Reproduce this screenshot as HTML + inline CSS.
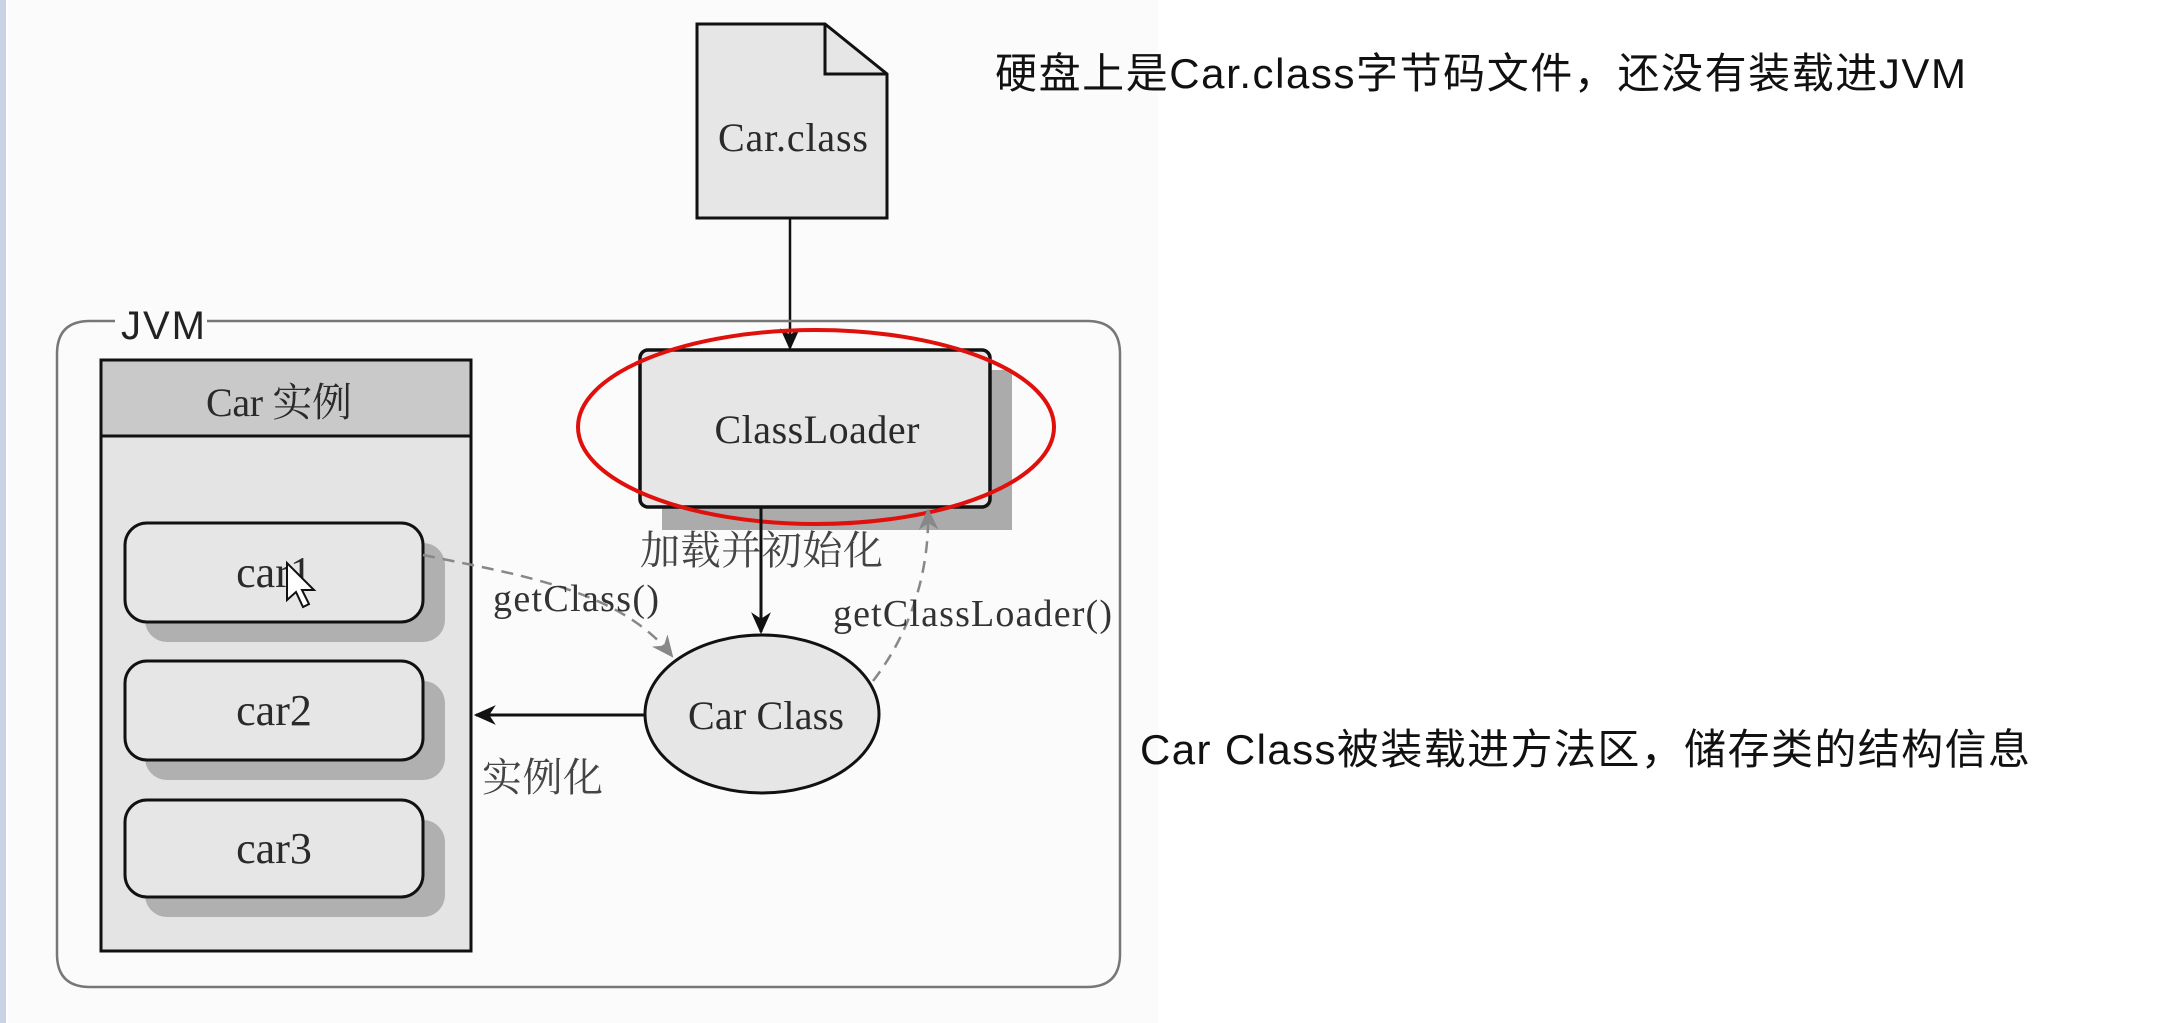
<!DOCTYPE html>
<html><head><meta charset="utf-8"><style>
html,body{margin:0;padding:0;background:#fff;width:2173px;height:1023px;overflow:hidden}
svg{display:block}
.s{font-family:"Liberation Serif","Noto Serif CJK SC",serif;fill:#2a2a2a}
.c{font-family:"Liberation Sans","Noto Sans CJK SC",sans-serif;fill:#111}
</style></head><body>
<svg width="2173" height="1023" viewBox="0 0 2173 1023" xmlns="http://www.w3.org/2000/svg">
<defs>
<marker id="ab" viewBox="0 0 20 20" refX="18" refY="10" markerWidth="22" markerHeight="22" markerUnits="userSpaceOnUse" orient="auto"><path d="M0,1 L20,10 L0,19 L6,10 Z" fill="#111"/></marker>
<marker id="ag" viewBox="0 0 20 20" refX="18" refY="10" markerWidth="22" markerHeight="22" markerUnits="userSpaceOnUse" orient="auto"><path d="M0,1 L20,10 L0,19 L6,10 Z" fill="#888"/></marker>
</defs>
<rect x="0" y="0" width="2173" height="1023" fill="#fff"/>
<rect x="8" y="0" width="1150" height="1023" fill="#fbfbfb"/>
<rect x="0" y="0" width="6" height="1023" fill="#c9d3e5"/>

<path d="M697,24 H825 L887,74 V218 H697 Z" fill="#e6e6e6" stroke="#111" stroke-width="3"/>
<path d="M825,24 V74 H887" fill="none" stroke="#111" stroke-width="3"/>
<text x="793" y="151" class="s" font-size="40" text-anchor="middle" textLength="150">Car.class</text>
<line x1="790" y1="218" x2="790" y2="348" stroke="#111" stroke-width="2.5" marker-end="url(#ab)"/>

<path d="M115,321 H90 Q57,321 57,354 V954 Q57,987 90,987 H1087 Q1120,987 1120,954 V354 Q1120,321 1087,321 H207" fill="none" stroke="#777" stroke-width="2.5"/>
<text x="121" y="339" font-family="'Liberation Sans',sans-serif" font-size="40" fill="#222" textLength="84">JVM</text>

<rect x="101" y="360" width="370" height="591" fill="#e4e4e4" stroke="#111" stroke-width="3"/>
<rect x="101" y="360" width="370" height="76" fill="#c9c9c9" stroke="#111" stroke-width="3"/>
<text x="206" y="416" class="s" font-size="40" textLength="146">Car 实例</text>

<g>
<rect x="145" y="543" width="300" height="99" rx="22" fill="#b0b0b0"/>
<rect x="125" y="523" width="298" height="99" rx="22" fill="#e6e6e6" stroke="#111" stroke-width="3"/>
<text x="274" y="587" class="s" font-size="44" text-anchor="middle">car1</text>
<rect x="145" y="681" width="300" height="99" rx="22" fill="#b0b0b0"/>
<rect x="125" y="661" width="298" height="99" rx="22" fill="#e6e6e6" stroke="#111" stroke-width="3"/>
<text x="274" y="725" class="s" font-size="44" text-anchor="middle">car2</text>
<rect x="145" y="820" width="300" height="97" rx="22" fill="#b0b0b0"/>
<rect x="125" y="800" width="298" height="97" rx="22" fill="#e6e6e6" stroke="#111" stroke-width="3"/>
<text x="274" y="863" class="s" font-size="44" text-anchor="middle">car3</text>
</g>
<path d="M287,563 L287,600 L296,592 L303,607 L309,604 L302,590 L314,590 Z" fill="#fff" stroke="#111" stroke-width="2"/>

<rect x="662" y="370" width="350" height="160" fill="#ababab"/>
<rect x="640" y="350" width="350" height="157" rx="8" fill="#e6e6e6" stroke="#111" stroke-width="3.5"/>
<text x="817" y="443" class="s" font-size="40" text-anchor="middle" textLength="205">ClassLoader</text>
<ellipse cx="816" cy="427" rx="238" ry="97" fill="none" stroke="#e0100c" stroke-width="4"/>

<line x1="761" y1="507" x2="761" y2="632" stroke="#111" stroke-width="3" marker-end="url(#ab)"/>
<text x="640" y="564" class="s" font-size="40" style="fill:#444" textLength="243">加载并初始化</text>

<ellipse cx="762" cy="714" rx="117" ry="79" fill="#e6e6e6" stroke="#111" stroke-width="3"/>
<text x="766" y="729" class="s" font-size="40" text-anchor="middle" textLength="156">Car Class</text>

<line x1="645" y1="715" x2="476" y2="715" stroke="#111" stroke-width="3" marker-end="url(#ab)"/>
<text x="482" y="791" class="s" font-size="40" style="fill:#444" textLength="121">实例化</text>

<path d="M423,555 C520,575 620,590 672,656" fill="none" stroke="#888" stroke-width="2.5" stroke-dasharray="12,8" marker-end="url(#ag)"/>
<text x="493" y="611" class="s" font-size="38" style="fill:#333" textLength="166">getClass()</text>

<path d="M873,681 C905,640 930,580 928,510" fill="none" stroke="#888" stroke-width="2.5" stroke-dasharray="12,8" marker-end="url(#ag)"/>
<text x="833" y="626" class="s" font-size="38" style="fill:#333" textLength="279">getClassLoader()</text>

<text x="995" y="88" class="c" font-size="42" textLength="971">硬盘上是Car.class字节码文件，还没有装载进JVM</text>
<text x="1140" y="764" class="c" font-size="42" textLength="890">Car Class被装载进方法区，储存类的结构信息</text>
</svg>
</body></html>
